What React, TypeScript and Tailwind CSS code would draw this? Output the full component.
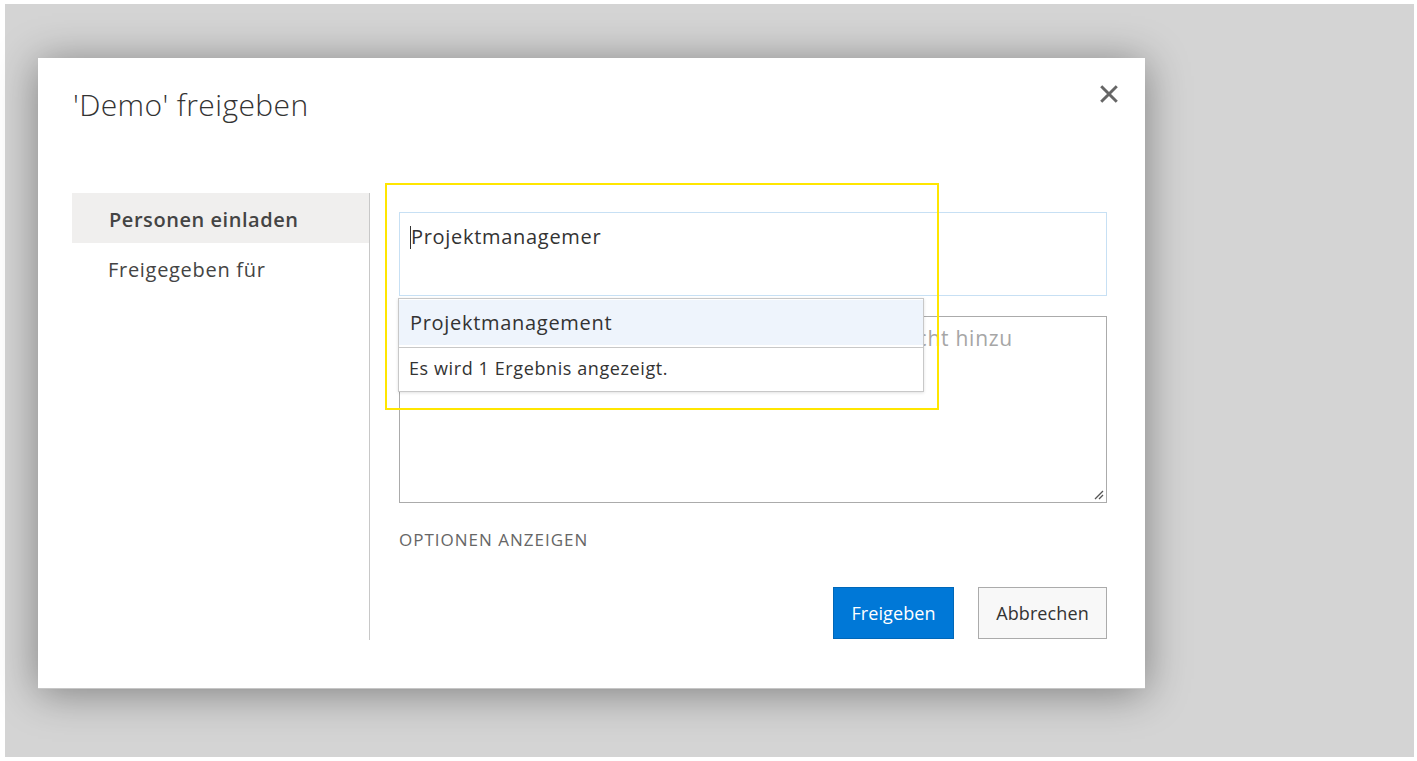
import React from "react";

const font = { fontFamily: '"Open Sans", "Noto Sans", sans-serif' };

export default function App() {
  return (
    <div className="min-h-screen w-full bg-white pt-[4px] pl-[5px] pr-[3px]" style={font}>
      <div className="h-[753px] w-full bg-[#d4d4d4] pl-[33px] pt-[54px]">
        <div className="relative w-[1107px] h-[631px] bg-white border-b border-[#c6c6c6] shadow-[0_4px_40px_rgba(0,0,0,0.4)]">
          {/* close */}
          <button className="absolute right-[26px] top-[26px] h-[20px] w-[20px] flex items-center justify-center text-[#666]">
            <svg viewBox="0 0 16 16" width="18" height="18">
              <path d="M2 2 L14 14 M14 2 L2 14" stroke="currentColor" strokeWidth="2.6" strokeLinecap="square" />
            </svg>
          </button>

          <h1 className="pl-[35px] pt-[27px] text-[30px] font-light text-[#333] leading-[40px] tracking-[0.4px]">
            'Demo' freigeben
          </h1>

          <div className="mt-[68px] flex pl-[34px]">
            {/* left nav */}
            <div className="w-[298px] h-[447px] border-r border-[#c8c8c8]">
              <div className="h-[50px] bg-[#f0efee] pl-[37px] pt-[3px] flex items-center text-[20px] font-semibold text-[#444] tracking-[0.55px]">
                Personen einladen
              </div>
              <div className="h-[50px] pl-[36px] pt-[4px] flex items-center text-[20px] text-[#444] tracking-[0.7px]">
                Freigegeben für
              </div>
            </div>

            {/* content */}
            <div className="relative pl-[29px] pt-[19px] w-[737px]">
              <div className="h-[84px] w-[708px] border border-[#c7e0f4] px-[10px] pt-[10px]">
                <div className="flex items-center text-[20px] text-[#333] leading-[28px] tracking-[0.7px]">
                  <span className="inline-block w-px h-[23px] bg-[#333]" />
                  Projektmanagemer
                </div>
              </div>

              <div className="mt-[20px] h-[187px] w-[708px] border border-[#ababab] relative px-[10px] pt-[7px] overflow-hidden">
                <div className="text-[21px] text-[#a6a6a6] leading-[28px] tracking-[0.75px] whitespace-nowrap">
                  Fügen Sie der Einladung eine persönliche Nachricht hinzu
                </div>
                <svg className="absolute right-[2px] bottom-[2px]" width="12" height="12" viewBox="0 0 12 12">
                  <path d="M11 3 L3 11 M11 7 L7 11" stroke="#555" strokeWidth="1.3" />
                </svg>
              </div>

              <div className="mt-[27px] text-[17px] text-[#666] tracking-[1px] leading-[20px]">
                OPTIONEN ANZEIGEN
              </div>

              <div className="mt-[37px] flex justify-end gap-[24px] w-[708px]">
                <button className="h-[52px] w-[121px] bg-[#0078d7] border border-[#0067b8] text-white text-[18px] tracking-[0.1px]">
                  Freigeben
                </button>
                <button className="h-[52px] w-[129px] bg-[#f8f8f8] border border-[#ababab] text-[#333] text-[18px] tracking-[0.1px]">
                  Abbrechen
                </button>
              </div>

              {/* suggestion dropdown */}
              <div className="absolute left-[28px] top-[105px] w-[526px] h-[94px] bg-white border border-[#c8c8c8] shadow-[0_1px_3px_rgba(0,0,0,0.12)]">
                <div className="mt-[1px] h-[45px] bg-[#eef4fc] pl-[11px] flex items-center text-[20px] text-[#333] tracking-[0.7px]">
                  Projektmanagement
                </div>
                <div className="border-t border-[#c8c8c8] mt-[2px] h-[42px] pl-[10px] flex items-center text-[18px] text-[#333] tracking-[0.6px]">
                  Es wird 1 Ergebnis angezeigt.
                </div>
              </div>

              {/* yellow highlight */}
              <div className="absolute left-[15px] top-[-10px] w-[554px] h-[227px] border-2 border-[#ffe600] pointer-events-none" />
            </div>
          </div>
        </div>
      </div>
    </div>
  );
}
